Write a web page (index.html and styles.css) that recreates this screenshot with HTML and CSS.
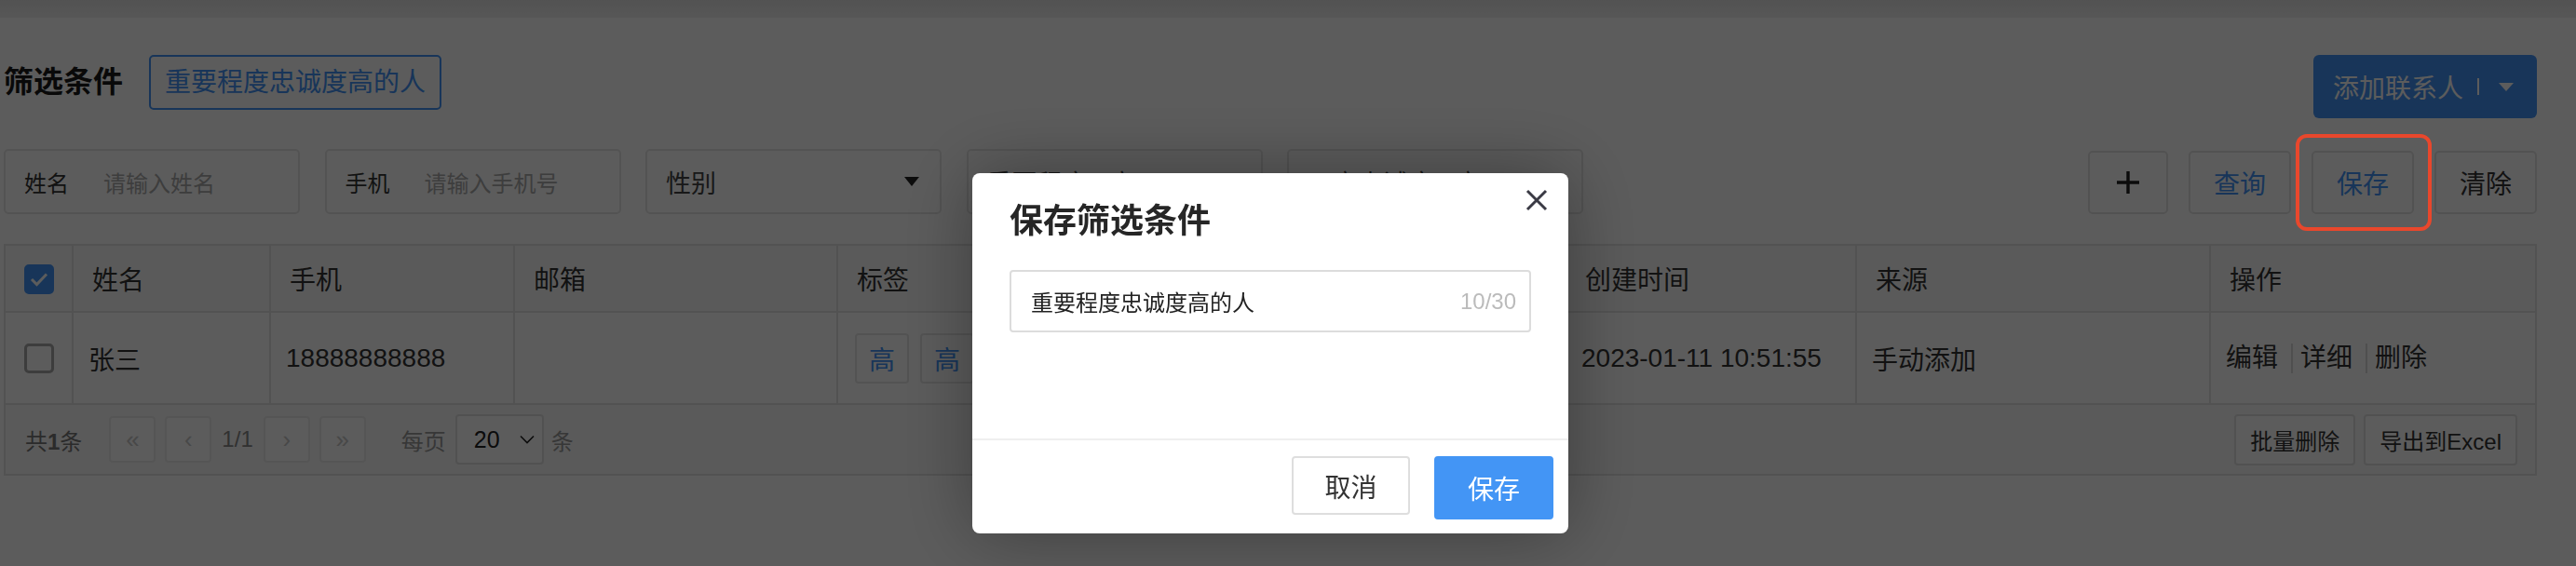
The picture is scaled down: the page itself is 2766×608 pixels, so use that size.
FILE: index.html
```html
<!DOCTYPE html>
<html lang="zh-CN">
<head>
<meta charset="utf-8">
<title>联系人</title>
<link rel="stylesheet" href="styles.css">
</head>
<body>
<div class="topbar"></div>
<div class="page">
  <div class="head">
    <div class="head-left">
      <h2 class="title">筛选条件</h2>
      <button class="saved-tag">重要程度忠诚度高的人</button>
    </div>
    <button class="add-btn"><span>添加联系人</span><span class="add-sep"></span><span class="tri tri-white"></span></button>
  </div>

  <div class="filters">
    <div class="fields">
      <div class="field"><span class="field-label">姓名</span><span class="ph">请输入姓名</span></div>
      <div class="field"><span class="field-label">手机</span><span class="ph">请输入手机号</span></div>
      <div class="field select"><span class="sel-text">性别</span><span class="tri"></span></div>
      <div class="field select"><span class="sel-text">重要程度 - 高</span><span class="tri"></span></div>
      <div class="field select"><span class="sel-text">用户忠诚度 - 高</span><span class="tri"></span></div>
    </div>
    <div class="actions">
      <button class="btn btn-icon"><svg width="26" height="26" viewBox="0 0 26 26"><path d="M13 1v24M1 13h24" stroke="#222" stroke-width="3.4" fill="none"/></svg></button>
      <button class="btn btn-blue">查询</button>
      <button class="btn btn-blue">保存</button>
      <button class="btn">清除</button>
    </div>
  </div>

  <div class="grid">
    <table class="tbl">
      <colgroup>
        <col class="c-check"><col class="c-name"><col class="c-phone"><col class="c-mail"><col class="c-tag"><col class="c-time"><col class="c-src"><col>
      </colgroup>
      <thead>
        <tr>
          <th class="cell-check"><span class="cb cb-on"><svg width="20" height="16" viewBox="0 0 20 16"><path d="M2 8l5.5 5.5L18 2.5" stroke="#fff" stroke-width="3" fill="none"/></svg></span></th>
          <th>姓名</th>
          <th>手机</th>
          <th>邮箱</th>
          <th>标签</th>
          <th>创建时间</th>
          <th>来源</th>
          <th>操作</th>
        </tr>
      </thead>
      <tbody>
        <tr>
          <td class="cell-check"><span class="cb"></span></td>
          <td>张三</td>
          <td>18888888888</td>
          <td></td>
          <td class="cell-tags"><span class="tag">高</span><span class="tag">高</span><span class="tag">高</span></td>
          <td>2023-01-11 10:51:55</td>
          <td>手动添加</td>
          <td><span class="op">编辑</span><span class="op">详细</span><span class="op">删除</span></td>
        </tr>
      </tbody>
    </table>
    <div class="grid-foot">
      <div class="pager">
        <span class="total">共<b>1</b>条</span>
        <span class="pg">«</span>
        <span class="pg pg-prev">‹</span>
        <span class="pg-num">1/1</span>
        <span class="pg pg-next">›</span>
        <span class="pg pg-last">»</span>
        <span class="per">每页</span>
        <span class="size-sel">20<svg width="16" height="10" viewBox="0 0 16 10"><path d="M1 1.5l7 7 7-7" stroke="#222" stroke-width="1.6" fill="none"/></svg></span>
        <span class="per-unit">条</span>
      </div>
      <div class="foot-actions">
        <button class="fbtn">批量删除</button>
        <button class="fbtn">导出到Excel</button>
      </div>
    </div>
  </div>
</div>

<div class="mask"></div>
<div class="highlight"></div>

<div class="modal">
  <div class="modal-main">
    <h3 class="modal-title">保存筛选条件</h3>
    <svg class="modal-close" width="24" height="24" viewBox="0 0 24 24"><path d="M2 2l20 20M22 2L2 22" stroke="#3a3a44" stroke-width="3" fill="none"/></svg>
    <div class="name-input"><span>重要程度忠诚度高的人</span><span class="count">10/30</span></div>
  </div>
  <div class="modal-foot">
    <button class="mbtn">取消</button>
    <button class="mbtn mbtn-primary">保存</button>
  </div>
</div>
</body>
</html>
```

FILE: styles.css
```css
* { box-sizing: border-box; }
html, body { margin: 0; padding: 0; }
body {
  width: 2766px;
  height: 608px;
  overflow: hidden;
  position: relative;
  background: #fff;
  color: #333;
  font-family: "Liberation Sans", "Noto Sans CJK SC", "Noto Sans", sans-serif;
}
button { font-family: inherit; cursor: pointer; }

.topbar { height: 19px; background: linear-gradient(#e4e4e4, #f0f0f0); }
.page { width: 2720px; margin-left: 4px; }

/* head */
.head { display: flex; justify-content: space-between; align-items: flex-start; margin-top: 40px; height: 68px; }
.head-left { display: flex; align-items: flex-start; }
.title { margin: 0; font-size: 32px; font-weight: 700; line-height: 59px; color: #1a1a1a; }
.saved-tag {
  margin-left: 28px; height: 59px; padding: 0 15px;
  border: 2px solid #4394f5; border-radius: 5px; background: #fff;
  color: #4394f5; font-size: 28px; line-height: 55px;
}
.add-btn {
  display: flex; align-items: center; width: 240px; height: 68px;
  padding: 0 0 0 21px; border: 0; border-radius: 6px;
  background: #4394f5; color: #fff; font-size: 28px;
}
.add-sep { width: 2px; height: 18px; background: #fff; margin-left: 15px; }
.tri { width: 0; height: 0; border-left: 8px solid transparent; border-right: 8px solid transparent; border-top: 10px solid #222; }
.tri-white { border-top-color: #fff; border-top-width: 9px; margin-left: 21px; }

/* filters */
.filters { display: flex; justify-content: space-between; align-items: flex-end; margin-top: 33px; }
.fields { display: flex; gap: 26.5px; }
.field {
  display: flex; align-items: center; width: 318px; height: 70px;
  padding: 0 22px 0 20px; border: 2px solid #e6e6e6; border-radius: 5px;
  font-size: 24px; background: #fff;
}
.field-label { width: 85px; flex: none; color: #333; }
.ph { color: #aaa; }
.sel-text { font-size: 27px; color: #444; white-space: nowrap; }
.select .tri { margin-left: auto; }
.actions { display: flex; gap: 22px; }
.btn {
  width: 110px; height: 68px; padding: 0;
  display: flex; align-items: center; justify-content: center;
  border: 2px solid #e3e3e3; border-radius: 5px; background: #fff;
  font-size: 28px; color: #333;
}
.btn-icon { width: 86px; }
.btn-blue { color: #4394f5; }

/* table */
.grid { margin-top: 32px; border: 2px solid #e3e3e3; }
.tbl { width: 100%; border-collapse: separate; border-spacing: 0; table-layout: fixed; }
.c-check { width: 73px; }
.c-name { width: 212px; }
.c-phone { width: 262px; }
.c-mail { width: 347px; }
.c-tag { width: 782px; }
.c-time { width: 312px; }
.c-src { width: 380px; }
.tbl th, .tbl td {
  border-right: 2px solid #e3e3e3; border-bottom: 2px solid #e3e3e3;
  text-align: left; font-size: 28px; font-weight: 400; color: #333;
  white-space: nowrap; overflow: hidden;
}
.tbl th { height: 72px; padding: 0 0 0 20px; background: #fafafa; }
.tbl td { height: 99px; padding: 0 0 0 16px; }
.tbl th:last-child, .tbl td:last-child { border-right: 0; }
.tbl .cell-check { padding: 0; text-align: center; }
.cb {
  display: inline-flex; align-items: center; justify-content: center; vertical-align: middle;
  width: 32px; height: 32px; border: 3px solid #a8a8a8; border-radius: 5px; background: #fff;
}
.cb-on { background: #4394f5; border-color: #4394f5; }
.tbl .cell-tags { padding-left: 18px; }
.tag {
  display: inline-flex; align-items: center; justify-content: center; vertical-align: middle;
  width: 58px; height: 54px; margin-right: 12px;
  border: 2px solid #e6e6e6; border-radius: 4px; color: #4394f5; font-size: 28px;
}
.op { display: inline-block; line-height: 32px; padding-right: 14px; vertical-align: middle; }
.op + .op { border-left: 2px solid #dcdcdc; padding-left: 8px; }

/* grid footer */
.grid-foot {
  display: flex; align-items: center; justify-content: space-between;
  height: 74px; padding: 0 19px 0 21px; background: #fafafa; font-size: 24px;
}
.pager { display: flex; align-items: center; }
.total { color: #777; margin-right: 29px; }
.total b { font-weight: 700; }
.pg {
  width: 50px; height: 50px; display: flex; align-items: center; justify-content: center;
  border: 2px solid #ececec; border-radius: 4px; background: #fff; color: #c8c8c8; font-size: 26px;
}
.pg-prev { margin-left: 10px; }
.pg-num { margin: 0 11px; color: #888; }
.pg-last { margin-left: 10px; }
.per { margin-left: 38px; color: #999; }
.size-sel {
  display: flex; align-items: center; justify-content: space-between;
  width: 95px; height: 54px; margin-left: 10px; padding: 0 8px 0 18px;
  border: 2px solid #e0e0e0; border-radius: 4px; background: #fff; color: #222; font-size: 25px;
}
.per-unit { margin-left: 8px; color: #999; }
.foot-actions { display: flex; gap: 9px; }
.fbtn {
  height: 55px; padding: 0 15px; border: 2px solid #e0e0e0; border-radius: 4px;
  background: #fff; color: #333; font-size: 24px;
}

/* overlay + modal */
.mask { position: fixed; inset: 0; background: rgba(0, 0, 0, 0.64); z-index: 10; }
.highlight {
  position: absolute; left: 2465px; top: 144px; width: 146px; height: 104px;
  border: 4px solid #e9472c; border-radius: 12px; z-index: 30;
}
.modal {
  position: fixed; left: 1044px; top: 186px; width: 640px; height: 387px;
  background: #fff; border-radius: 8px; z-index: 20;
  box-shadow: 0 0 80px rgba(0, 0, 0, 0.35);
  display: flex; flex-direction: column;
}
.modal-main { position: relative; height: 285px; padding: 27px 40px 0; }
.modal-title { margin: 0; font-size: 36px; line-height: 50px; font-weight: 700; color: #262626; }
.modal-close { position: absolute; top: 17px; right: 22px; }
.name-input {
  display: flex; align-items: center; justify-content: space-between;
  margin-top: 27px; height: 67px; padding: 0 14px 0 21px;
  border: 2px solid #dcdcdc; border-radius: 4px; font-size: 24px; color: #222;
}
.count { color: #bbb; }
.modal-foot {
  display: flex; justify-content: flex-end; align-items: flex-start; gap: 26px;
  border-top: 2px solid #efefef; padding: 17px 16px 0;
}
.mbtn {
  width: 127px; height: 63px; border: 2px solid #dedede; border-radius: 4px;
  background: #fff; color: #333; font-size: 28px;
}
.mbtn-primary { width: 128px; height: 68px; background: #4395f5; border-color: #4395f5; color: #fff; }
```
